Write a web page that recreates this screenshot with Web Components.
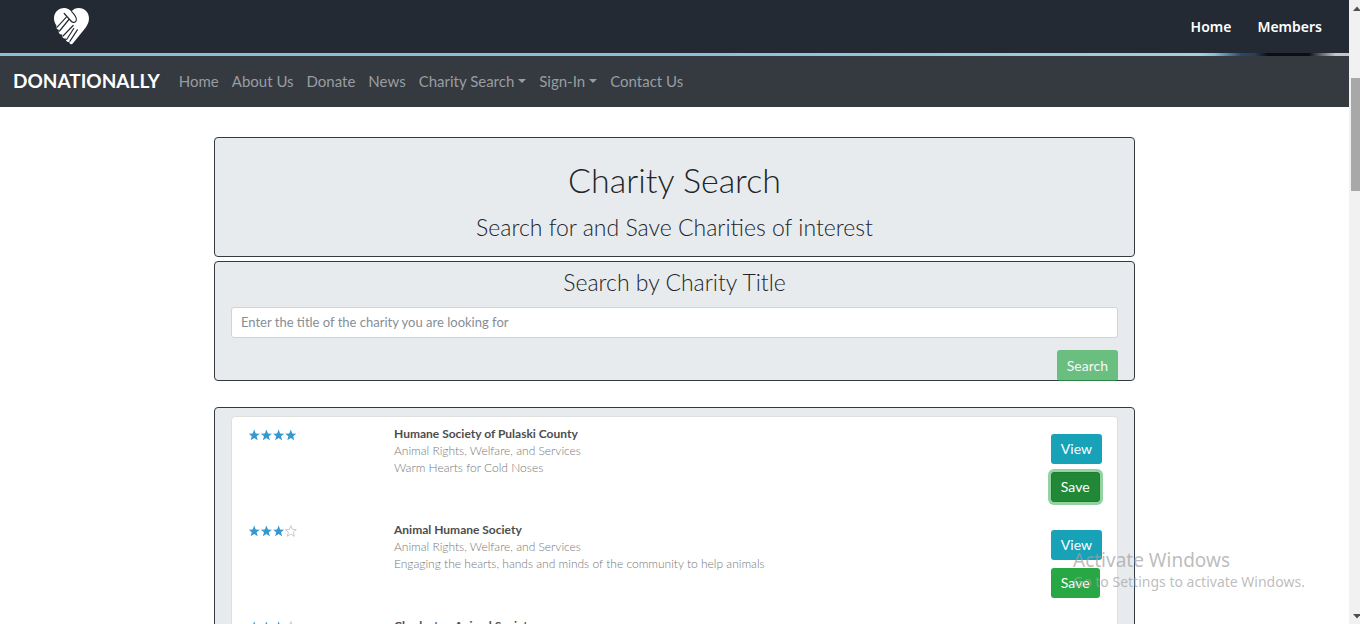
<!DOCTYPE html>
<html lang="en">
<head>
<meta charset="utf-8">
<title>Donationally - Charity Search</title>
<style>
  html, body { margin: 0; height: 100%; overflow: hidden; background: #fff; }
  body { font-family: Lato, "Liberation Sans", sans-serif; font-weight: 300; color: #212529; }
</style>
</head>
<body>
<donation-app></donation-app>

<script>
const define = (name, html, init) => customElements.define(name, class extends HTMLElement {
  constructor() {
    super();
    const t = document.createElement('template');
    t.innerHTML = html;
    this.attachShadow({ mode: 'open' }).append(t.content.cloneNode(true));
  }
  connectedCallback() { if (init) init(this, this.shadowRoot); }
});

define('heart-logo', `
<style>:host{display:block} svg{display:block}</style>
<svg width="35" height="37" viewBox="0 0 36 37" preserveAspectRatio="none" role="img" aria-label="Donationally">
  <path fill="#fff" d="M17.800 3.500C20 1 22.500 0 25.500 0C31.500 0 36 4.500 36 10.500C36 15 33.500 18.500 31 21.500L19.500 35.300C18 37 15.500 36 15.800 33.700C14 34.500 11.500 33 12.300 30.500C10 31 7.600 29 8.600 26.500C6 27 4 24.500 5.200 22C2.500 21.500 2 19.500 2.600 17.800C1 15.500 0 13 0 10.500C0 4.500 4.500 0 10.500 0C13.500 0 16 1.200 17.800 3.500Z"/>
  <g fill="none" stroke="#242a33" stroke-width="1.200" stroke-linecap="round" stroke-linejoin="round">
    <path d="M10.500 5.500L17.500 13C19.500 15.300 22.500 14.700 23 12C23.400 9.500 22.500 8 18.200 3.700"/>
    <path d="M12.700 9.200L3 19.300"/>
    <path d="M15.300 11.500L5.700 23"/>
    <path d="M19.700 17.500L9.300 28"/>
    <path d="M20.300 20.500L13 31.500"/>
    <path d="M24 21.800L16.300 33.300"/>
  </g>
</svg>`);

define('top-bar', `
<style>
  :host{display:block;background:#242a33}
  header{display:flex;align-items:center;justify-content:space-between;height:53px;padding:0 27px 0 54px}
  nav{display:flex;gap:26px;padding-bottom:1px;font:600 14px/19px "Noto Sans","Open Sans",sans-serif}
  a{color:#fff;text-decoration:none}
  .strip{height:3px;background:linear-gradient(90deg,#8dbfd6 0,#8dbfd6 50%,#a5cfe0 89%,#8dbfd6 90%,#2b4869 92%,#24405c 93%,#0b0e13 94%,#0b0e13 97%,#c3c6ca 99%)}
</style>
<header>
  <heart-logo></heart-logo>
  <nav aria-label="Account"><a href="#home">Home</a><a href="#members">Members</a></nav>
</header>
<div class="strip"></div>`);

define('nav-link', `
<style>
  :host{display:block}
  a{display:flex;align-items:center;gap:4px;color:#9a9da0;text-decoration:none;font-size:15px;line-height:24px;font-weight:400;white-space:nowrap}
  i{display:none;border:4px solid transparent;border-top-color:currentColor;border-bottom:0}
  :host([menu]) i{display:block}
</style>
<a href="#"><slot></slot><i></i></a>`);

define('main-nav', `
<style>
  :host{display:block;background:#343a40}
  nav{display:flex;align-items:center;box-sizing:border-box;height:51px;padding:0 13px 2px;gap:13px}
  .brand{color:#fff;text-decoration:none;font-weight:700;font-size:19px;line-height:24px;margin-right:6px}
</style>
<nav aria-label="Main">
  <a class="brand" href="#">DONATIONALLY</a>
  <nav-link>Home</nav-link><nav-link>About Us</nav-link><nav-link>Donate</nav-link><nav-link>News</nav-link>
  <nav-link menu>Charity Search</nav-link><nav-link menu>Sign-In</nav-link><nav-link>Contact Us</nav-link>
</nav>`);

define('panel-box', `
<style>:host{display:block;box-sizing:border-box;background:#e8ebee;border:1px solid #343a40;border-radius:4px;padding:0 16px}</style>
<slot></slot>`);

define('action-button', `
<style>
  :host{display:block}
  button{display:block;box-sizing:border-box;height:30px;padding:0 10px;border:0;border-radius:3px;background:#28a745;color:#fff;font:400 14px/30px Lato,sans-serif}
  :host([kind=view]) button{background:#17a2b8}
  :host([active]) button{background:#218838;border:1px solid #1e7e34;padding:0 9px;line-height:28px;box-shadow:0 0 0 3px rgba(40,167,69,.5)}
  :host([muted]) button{opacity:.65;height:31px}
</style>
<button type="button"><slot></slot></button>`);

define('search-form', `
<style>
  :host{display:block}
  form{display:flex;flex-direction:column;padding-top:6px}
  label{font-size:23px;line-height:29px;text-align:center;margin-bottom:10px}
  input{box-sizing:border-box;width:100%;height:31px;border:1px solid #ced4da;border-radius:3px;background:#fff;padding:0 9px 1px;font:400 13px/20px Lato,sans-serif;color:#495057}
  input::placeholder{color:#868e96;opacity:1}
  action-button{align-self:flex-end;margin:12px 0 -1px}
</style>
<form onsubmit="return false">
  <label for="q">Search by Charity Title</label>
  <input id="q" type="text" placeholder="Enter the title of the charity you are looking for">
  <action-button muted>Search</action-button>
</form>`);

const STAR = 'M6.200 .600L7.700 4.400L11.700 4.700L8.600 7.300L9.700 11.300L6.200 9.100L2.700 11.300L3.800 7.300L.700 4.700L4.700 4.400Z';
define('star-rating', `
<style>:host{display:block} svg{display:block}</style><div></div>`, (el, root) => {
  const n = Number(el.getAttribute('value'));
  root.querySelector('div').innerHTML = `<svg width="49" height="12" viewBox="0 0 49 12" role="img" aria-label="${n} of 4 stars">` +
    [0, 1, 2, 3].map(i => `<path transform="translate(${i * 12.2} 0)" d="${STAR}" ${i < n ? 'fill="#3598cf"' : 'fill="#fff" stroke="#c4c4c4" stroke-width=".9"'}/>`).join('') + '</svg>';
});

define('charity-row', `
<style>
  :host{display:grid;grid-template-columns:146px 1fr auto;height:96px;padding:0 15px 0 16px;font-size:12px;line-height:17px;color:#777}
  .stars{padding-top:12px}
  .text{padding-top:8px}
  h3{margin:0;font-size:12px;line-height:17px;font-weight:700;color:#4d4d4d}
  .buttons{padding-top:17px;display:flex;flex-direction:column;align-items:flex-start;gap:8px}
</style>
<div class="stars"></div>
<div class="text"><h3><slot name="title"></slot></h3><slot name="type"></slot><slot name="motto"></slot></div>
<div class="buttons"><action-button kind="view">View</action-button><action-button class="save">Save</action-button></div>`,
(el, root) => {
  root.querySelector('.stars').innerHTML = `<star-rating value="${el.getAttribute('stars')}"></star-rating>`;
  if (el.hasAttribute('saved')) root.querySelector('.save').setAttribute('active', '');
});

define('page-scrollbar', `
<style>
  :host{display:flex;flex-direction:column;justify-content:space-between;background:#f1f1f1;overflow:hidden;padding:6px 0 5px;box-sizing:border-box}
  svg{display:block;margin-left:4px}
  .track{flex:1;padding:67px 0 0 2px}
  .thumb{height:113px;background:#a8a8a8}
</style>
<svg width="8" height="5"><path fill="#505050" d="M0 5L4 0.500L8 5Z"/></svg>
<div class="track"><div class="thumb"></div></div>
<svg width="8" height="5"><path fill="#505050" d="M0 0L4 4.500L8 0Z"/></svg>`);

define('windows-notice', `
<style>
  :host{position:absolute;right:51px;bottom:32px;width:236px;font-family:"Noto Sans","Open Sans",sans-serif;font-weight:400;color:rgba(160,160,160,.7);pointer-events:none;white-space:nowrap}
  strong,span{display:block;font-weight:400}
  strong{font-size:19px;line-height:24px}
  span{font-size:14px;line-height:20px}
</style>
<strong>Activate Windows</strong><span>Go to Settings to activate Windows.</span>`);

define('donation-app', `
<style>
  :host{display:grid;grid-template-columns:minmax(0,1fr) 11px;height:100vh;position:relative;overflow:hidden}
  .page{overflow:hidden}
  main{max-width:921px;margin:30px auto 0}
  .intro{text-align:center;padding-top:23px;padding-bottom:14px;margin-bottom:4px}
  h1,h2{margin:0;font-weight:300}
  h1{font-size:34px;line-height:38px;margin-bottom:14px}
  h2{font-size:23px;line-height:29px}
  .results{margin-top:26px;padding-top:8px}
  .card{background:#fff;border:1px solid #dfdfdf;border-radius:4px}
  p{margin:0}
</style>
<div class="page">
  <top-bar></top-bar>
  <main-nav></main-nav>
  <main>
    <panel-box class="intro"><h1>Charity Search</h1><h2>Search for and Save Charities of interest</h2></panel-box>
    <panel-box><search-form></search-form></panel-box>
    <panel-box class="results"><div class="card">
      <charity-row stars="4" saved><span slot="title">Humane Society of Pulaski County</span><p slot="type">Animal Rights, Welfare, and Services</p><p slot="motto">Warm Hearts for Cold Noses</p></charity-row>
      <charity-row stars="3"><span slot="title">Animal Humane Society</span><p slot="type">Animal Rights, Welfare, and Services</p><p slot="motto">Engaging the hearts, hands and minds of the community to help animals</p></charity-row>
      <charity-row stars="3"><span slot="title">Charleston Animal Society</span><p slot="type">Animal Rights, Welfare, and Services</p></charity-row>
    </div></panel-box>
  </main>
</div>
<page-scrollbar></page-scrollbar>
<windows-notice></windows-notice>`);
</script>
</body>
</html>
